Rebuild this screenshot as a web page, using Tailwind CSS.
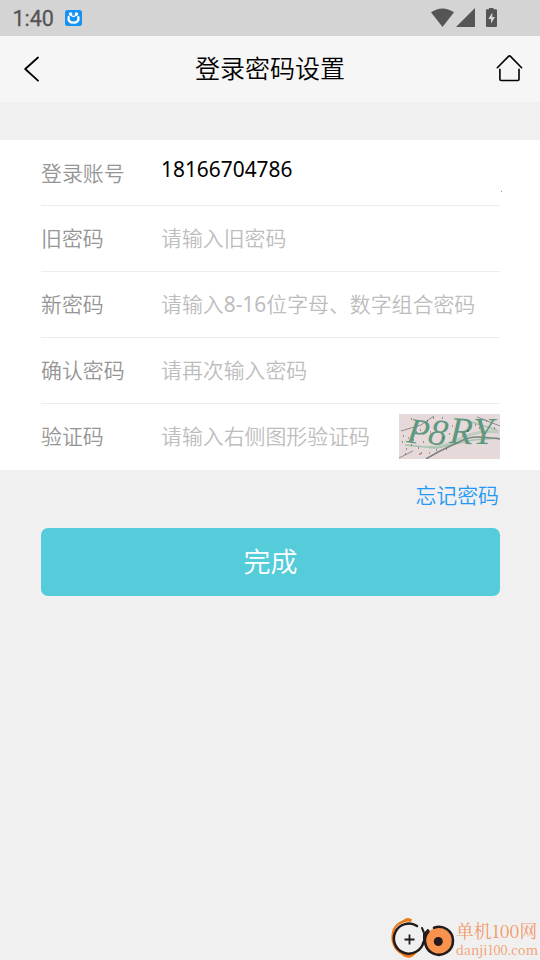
<!DOCTYPE html>
<html lang="zh-CN">
<head>
<meta charset="utf-8">
<title>登录密码设置</title>
<script src="https://cdn.jsdelivr.net/npm/@tailwindcss/browser@4"></script>
</head>
<body class="bg-[#f0f0f0]">
<div class="relative flex h-[960px] w-[540px] flex-col overflow-hidden bg-[#f0f0f0] font-['Noto_Sans','Noto_Sans_CJK_SC',sans-serif]">
  <div class="flex h-9 shrink-0 items-center bg-[#d4d4d4] pl-[12.500px] pr-[41px]">
    <span class="w-[42px] pt-0.5 font-['Roboto',sans-serif] text-[21.500px] leading-none text-[#555] [-webkit-text-stroke:0.3px_#555]">1:40</span>
    <svg class="ml-[10.500px]" width="17" height="16" viewBox="0 0 17 16"><rect width="17" height="16" rx="2.500" fill="#1593f5"/><circle cx="5.600" cy="4" r="1.800" fill="#fff"/><circle cx="11.400" cy="4" r="1.800" fill="#fff"/><path d="M3.700 7C2.800 10.500 5 12.700 8.500 12.700s5.700-2.200 4.800-5.700" fill="none" stroke="#fff" stroke-width="2.300" stroke-linecap="round"/><path d="M5 5 8.500 6.500 12 5" fill="none" stroke="#fff" stroke-width="1.300"/></svg>
    <svg class="ml-auto" width="68" height="20" viewBox="0 0 68 20" fill="#555"><path d="M0 4.200Q11.500-3.400 23 4.200L11.500 19Z"/><path d="M25 19 44 0V19Z"/><path d="M58 0h4.500v1.300H65q1 0 1 1V18q0 1-1 1H56q-1 0-1-1V2.300q0-1 1-1h2Z"/><path d="M61.300 4.500 57.300 11H60v4.500L64 9H61.300Z" fill="#d4d4d4"/></svg>
  </div>
  <header class="flex h-[66px] shrink-0 items-center justify-between bg-[#f6f6f6] pl-6 pr-4">
    <svg width="20" height="28" viewBox="0 0 20 28" fill="none" stroke="#000" stroke-width="1.800" stroke-linecap="round" stroke-linejoin="round"><path d="M14 2.500 1.200 14 14 25.700"/></svg>
    <h1 class="pb-0.5 text-[25px] font-[350] leading-9 text-black">登录密码设置</h1>
    <svg width="28" height="28" viewBox="0 0 28 28" fill="none" stroke="#000" stroke-width="1.600" stroke-linecap="round" stroke-linejoin="round"><path d="M1.300 12.700 12.500 1.400Q13.500.5 14.500 1.400L25.600 12.700M3.900 14.300V24.300Q3.900 25.500 5.100 25.500H21.800Q23 25.500 23 24.300V14.300"/></svg>
  </header>
  <main class="mt-[38px]">
    <div class="relative bg-white pl-[41px] pr-10 text-[20.900px] font-[350] leading-[30px] text-[#959595]">
      <div class="flex h-[66px] items-center border-b border-[#ececec]"><span class="w-[120px]">登录账号</span><span class="pb-[8px] font-normal text-black">18166704786</span></div>
      <span class="absolute left-[501px] top-[51px] size-px bg-[#999]"></span>
      <div class="flex h-[66px] items-center border-b border-[#ececec] pb-0.5"><span class="w-[120px]">旧密码</span><span class="text-[#bdbdbd]">请输入旧密码</span></div>
      <div class="flex h-[66px] items-center border-b border-[#ececec] pb-0.5"><span class="w-[120px]">新密码</span><span class="whitespace-nowrap text-[#bdbdbd]">请输入<span class="font-normal">8-16</span>位字母、数字组合密码</span></div>
      <div class="flex h-[66px] items-center border-b border-[#ececec] pb-0.5"><span class="w-[120px]">确认密码</span><span class="text-[#bdbdbd]">请再次输入密码</span></div>
      <div class="flex h-[66px] items-center pb-0.5"><span class="w-[120px]">验证码</span><span class="text-[#bdbdbd]">请输入右侧图形验证码</span>
        <svg class="ml-auto" width="101" height="45" viewBox="0 0 101 45">
          <rect width="101" height="45" fill="#e5d9da"/>
          <g fill="none" stroke="#a5c4ad"><path d="M30 33C55 35 65 14 100 18" stroke-width="3" opacity=".6"/><path d="M6 31 38 34 74 26 100 24M69 7 98 16" stroke-width="1.500"/><path d="M27 45C45 34 50 33 62 27S85 23 101 25" stroke="#7c827e" stroke-width="1.500"/><path d="M2 17 22 11 35 2M0 44 14 37M78 3 101 12" stroke="#8f8d8c"/></g>
          <g fill="#5f9880" font-family="Liberation Serif, serif" font-style="italic"><text x="7" y="28" font-size="36" transform="rotate(8 7 28)">P</text><text x="28" y="29" font-size="37" transform="rotate(10 28 29)">8</text><text x="50" y="29" font-size="38" transform="rotate(3 50 29)">R</text><text x="74" y="30" font-size="37">Y</text></g>
          <path d="M4 22h1M7 35h1M12 5h1M14 26h1M19 34h1M22 39h1M6 40h1M24 28h1M28 7h1M34 4h1M43 4h1M50 20h1M47 35h1M68 17h2M76 11h1M80 14h1M87 7h1M95 14h1M17 18h1M21 16h1M37 36h1M12 31h1M3 28h1M44 24h1" stroke="#454545" stroke-width="1.200"/>
          <path d="M9 24h1M20 40h2M31 18h1M53 12h1M63 22h1M84 21h1M30 39h1" stroke="#c7777b" stroke-width="1.500"/>
        </svg>
      </div>
    </div>
    <div class="flex h-[58px] justify-end pr-[41px] pt-2.5"><a class="text-[20.900px] font-[350] leading-[30px] text-[#2598f3]">忘记密码</a></div>
    <button class="mx-[41px] block h-[68px] w-[459px] rounded-[7px] bg-[#55ccda] pb-0.5 text-[27px] font-[350] leading-none text-white">完成</button>
  </main>
  <div class="absolute bottom-0 left-[390px] flex h-[44px] w-[150px] items-start">
    <svg class="shrink-0" width="65" height="44" viewBox="0 0 65 44" fill="none"><path d="M14 5Q1 10 2.500 24 4 34 13 38" stroke="#ef7917" stroke-width="2"/><path d="M10 7Q17-1 22 3.500L21 6Q15 4 9 9ZM9 35Q18 40 27 36Q21 45 13 40Z" fill="#ef7917"/><path d="M27 10A15 15 0 1 0 33.500 26" stroke="#241b1c" stroke-width="2.500" stroke-linecap="round"/><path d="M32 12 34.500 18 38 14M34 18V26" stroke="#241b1c" stroke-width="2" stroke-linecap="round" stroke-linejoin="round"/><circle cx="48.300" cy="25.500" r="13.800" fill="#f8924d"/><path d="M44 11.700A14 14 0 1 1 38.500 15.500" stroke="#241b1c" stroke-width="2.600" stroke-linecap="round"/><circle cx="48.300" cy="25.500" r="4.500" fill="#241b1c"/><path d="M14.500 23.500h10M19.500 18.500v10" stroke="#241b1c" stroke-width="1.800"/></svg>
    <div class="ml-[1px] whitespace-nowrap font-['Noto_Serif_CJK_SC','Liberation_Serif','Noto_Sans_CJK_SC',serif] text-[#f39968]">
      <div class="pt-0.5 text-[17.700px] leading-[25px]">单机100网</div>
      <div class="text-[12.700px] leading-[13px]">danji100.com</div>
    </div>
  </div>
</div>
</body>
</html>
